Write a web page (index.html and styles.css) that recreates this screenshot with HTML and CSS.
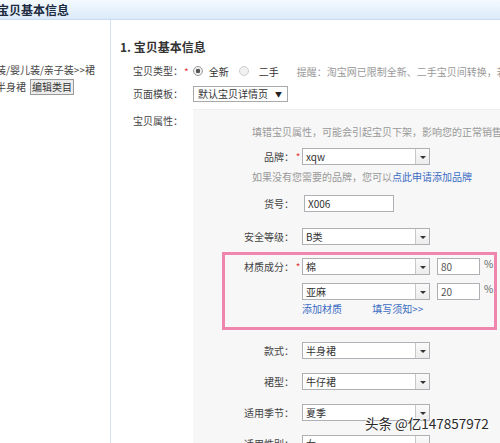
FILE: index.html
```html
<!DOCTYPE html>
<html lang="zh-CN">
<head>
<meta charset="utf-8">
<title>宝贝基本信息</title>
<link rel="stylesheet" href="styles.css">
</head>
<body>
<div class="page">
  <div class="topbar"><span class="topbar-title">宝贝基本信息</span></div>
  <div class="layout">
    <aside class="side">
      <div class="cat">
        <div class="cat-line">装/婴儿装/亲子装&gt;&gt;裙</div>
        <div class="cat-line">半身裙 <span class="btn">编辑类目</span></div>
      </div>
    </aside>
    <main class="main">
      <h2 class="title">1. 宝贝基本信息</h2>
      <div class="row r-type">
        <span class="lbl">宝贝类型：</span><span class="star">*</span>
        <span class="radio on"></span><span class="opt">全新</span>
        <span class="radio off"></span><span class="opt opt2">二手</span>
        <span class="tip">提醒：淘宝网已限制全新、二手宝贝间转换，若需要转换请重新发布</span>
      </div>
      <div class="row r-tpl">
        <span class="lbl">页面模板：</span>
        <span class="nsel">默认宝贝详情页<span class="nsel-arrow">▼</span></span>
      </div>
      <div class="row r-attr">
        <span class="lbl lbl-top">宝贝属性：</span>
        <div class="panel">
          <div class="warn">填错宝贝属性，可能会引起宝贝下架，影响您的正常销售</div>

          <div class="attr a-brand">
            <span class="attr-lbl">品牌：</span><span class="attr-star">*</span>
            <div class="sel"><span class="sel-val">xqw</span><span class="sel-btn"><i class="tri"></i></span></div>
          </div>
          <div class="hint">如果没有您需要的品牌，您可以<span class="link">点此申请添加品牌</span></div>

          <div class="attr a-no">
            <span class="attr-lbl">货号：</span><span class="attr-star"></span>
            <span class="inp inp-no">X006</span>
          </div>

          <div class="attr a-safe">
            <span class="attr-lbl">安全等级：</span><span class="attr-star"></span>
            <div class="sel"><span class="sel-val">B类</span><span class="sel-btn"><i class="tri"></i></span></div>
          </div>

          <div class="pinkbox">
            <div class="attr p-row">
              <span class="attr-lbl p-lbl">材质成分：</span><span class="attr-star">*</span>
              <div class="sel"><span class="sel-val">棉</span><span class="sel-btn"><i class="tri"></i></span></div>
              <span class="inp inp-pct">80</span><span class="pct">%</span>
            </div>
            <div class="attr p-row p-row2">
              <span class="attr-lbl p-lbl"></span><span class="attr-star"></span>
              <div class="sel"><span class="sel-val">亚麻</span><span class="sel-btn"><i class="tri"></i></span></div>
              <span class="inp inp-pct">20</span><span class="pct">%</span>
            </div>
            <div class="p-links">
              <span class="link">添加材质</span>
              <span class="link link2">填写须知&gt;&gt;</span>
            </div>
          </div>

          <div class="attr a-style">
            <span class="attr-lbl">款式：</span><span class="attr-star"></span>
            <div class="sel"><span class="sel-val">半身裙</span><span class="sel-btn"><i class="tri"></i></span></div>
          </div>
          <div class="attr a-next">
            <span class="attr-lbl">裙型：</span><span class="attr-star"></span>
            <div class="sel"><span class="sel-val">牛仔裙</span><span class="sel-btn"><i class="tri"></i></span></div>
          </div>
          <div class="attr a-next">
            <span class="attr-lbl">适用季节：</span><span class="attr-star"></span>
            <div class="sel"><span class="sel-val">夏季</span><span class="sel-btn"><i class="tri"></i></span></div>
          </div>
          <div class="attr a-next">
            <span class="attr-lbl">适用性别：</span><span class="attr-star"></span>
            <div class="sel"><span class="sel-val">女</span><span class="sel-btn"><i class="tri"></i></span></div>
          </div>
        </div>
      </div>
    </main>
  </div>
  <div class="watermark">头条 @亿147857972</div>
</div>
</body>
</html>
```
FILE: styles.css
```css
html, body {
  margin: 0;
  padding: 0;
  background: #fff;
}
body {
  width: 500px;
  height: 443px;
  overflow: hidden;
  font-family: "Noto Sans CJK SC", "Liberation Sans", sans-serif;
  font-size: 10px;
  color: #444;
}
.page {
  position: relative;
  width: 500px;
  height: 443px;
  overflow: hidden;
}
.topbar {
  height: 20px;
  box-sizing: border-box;
  border-bottom: 1px solid #c9dcef;
  background: linear-gradient(#f4f9fe, #dbeaf9);
  display: flex;
  align-items: center;
}
.topbar-title {
  margin-left: -3px;
  font-size: 12px;
  font-weight: bold;
  color: #1c2a40;
  line-height: 16px;
}
.layout {
  display: flex;
  height: 423px;
}
.side {
  width: 110px;
  flex: none;
  border-right: 1px solid #d3e2f1;
  overflow: hidden;
}
.cat {
  margin-left: -4px;
  padding-top: 41px;
  white-space: nowrap;
  color: #444;
}
.cat-line {
  line-height: 17px;
  height: 17px;
  display: flex;
  align-items: center;
}
.btn {
  display: inline-block;
  margin-left: 4px;
  height: 16px;
  line-height: 14px;
  box-sizing: border-box;
  padding: 0 1px;
  border: 1px solid #9a9a9a;
  background: #ececec;
  color: #333;
}
.main {
  flex: 1;
  padding-left: 9px;
  overflow: hidden;
}
.title {
  margin: 18px 0 0 0;
  font-size: 12px;
  line-height: 18px;
  font-weight: bold;
  color: #333;
}
.row {
  display: flex;
  align-items: center;
  padding-left: 13px;
  white-space: nowrap;
}
.r-type {
  margin-top: 7px;
  height: 16px;
}
.r-tpl {
  margin-top: 7px;
  height: 16px;
}
.r-attr {
  margin-top: 7px;
  align-items: flex-start;
}
.lbl {
  width: 60px;
  flex: none;
  color: #444;
  line-height: 16px;
}
.r-type .lbl {
  width: 50px;
}
.lbl-top {
  padding-top: 4px;
}
.star {
  color: #e4393c;
  width: 6px;
  margin-left: 1px;
  font-size: 10px;
}
.radio {
  width: 10px;
  height: 10px;
  box-sizing: border-box;
  border-radius: 50%;
  flex: none;
  display: flex;
  align-items: center;
  justify-content: center;
}
.radio.on {
  margin-left: 4px;
  border: 1px solid #9a9a9a;
  background: radial-gradient(circle, #555 0 2px, #eee 2.5px);
}
.radio.off {
  margin-left: 10px;
  border: 1px solid #cfcfcf;
  background: #f1f1f1;
}
.opt {
  margin-left: 6px;
  color: #333;
}
.opt2 {
  margin-left: 10px;
}
.tip {
  margin-left: 18px;
  color: #999;
}
.nsel {
  width: 95px;
  height: 16px;
  box-sizing: border-box;
  border: 1px solid #a9a9a9;
  background: #fff;
  display: flex;
  align-items: center;
  padding-left: 4px;
  color: #333;
  line-height: 14px;
}
.nsel-arrow {
  margin-left: 7px;
  font-size: 7px;
  color: #222;
}
.panel {
  flex: none;
  width: 340px;
  height: 340px;
  background: #f7f7f7;
  border-top: 1px solid #eeeeee;
  box-sizing: border-box;
  padding-top: 14px;
}
.warn {
  padding-left: 59px;
  line-height: 16px;
  color: #999;
  white-space: nowrap;
}
.attr {
  display: flex;
  align-items: center;
  height: 17px;
  white-space: nowrap;
}
.attr-lbl {
  width: 101px;
  flex: none;
  text-align: right;
  color: #444;
  line-height: 16px;
}
.attr-star {
  width: 8px;
  flex: none;
  text-align: center;
  color: #e4393c;
  font-size: 10px;
  line-height: 16px;
}
.a-brand { margin-top: 8px; }
.a-no { margin-top: 10px; }
.a-safe { margin-top: 16px; }
.a-style { margin-top: 12px; }
.a-next { margin-top: 14px; }
.hint {
  margin-top: 4px;
  padding-left: 59px;
  line-height: 16px;
  color: #999;
  white-space: nowrap;
}
.link {
  color: #3b6cc4;
}
.sel {
  display: flex;
  width: 128px;
  height: 17px;
  box-sizing: border-box;
  border: 1px solid #aeb0b5;
  background: #fff;
  flex: none;
}
.sel-val {
  flex: 1;
  padding-left: 3px;
  line-height: 15px;
  color: #333;
}
.sel-btn {
  width: 13px;
  border-left: 1px solid #c8c8c8;
  background: linear-gradient(#fafafa, #ececec);
  display: flex;
  align-items: center;
  justify-content: center;
}
.tri {
  display: block;
  width: 0;
  height: 0;
  margin-top: 2px;
  border-left: 3px solid transparent;
  border-right: 3px solid transparent;
  border-top: 3px solid #333;
}
.inp {
  display: block;
  height: 17px;
  box-sizing: border-box;
  border: 1px solid #aeb0b5;
  background: #fff;
  padding-left: 3px;
  line-height: 15px;
  color: #333;
  flex: none;
}
.inp-no {
  width: 90px;
  margin-left: 2px;
}
.inp-pct {
  width: 43px;
  margin-left: 7px;
  color: #555;
}
.pct {
  margin-left: 4px;
  align-self: flex-start;
  line-height: 12px;
  color: #666;
}
.pinkbox {
  margin-top: 7px;
  margin-left: 29px;
  width: 275px;
  box-sizing: border-box;
  border: 3px solid #f086ae;
  padding: 3px 0 10px 0;
}
.p-lbl {
  width: 69px;
}
.p-row2 {
  margin-top: 8px;
}
.p-links {
  margin-top: 1px;
  padding-left: 77px;
  line-height: 16px;
  white-space: nowrap;
}
.link2 {
  margin-left: 28px;
}
.watermark {
  position: absolute;
  left: 365px;
  top: 414px;
  font-size: 13.5px;
  line-height: 18px;
  color: #2a2a2a;
  white-space: nowrap;
  text-shadow: 0 0 2px #fff, 0 0 2px #fff, 0 0 3px #fff;
}
```
